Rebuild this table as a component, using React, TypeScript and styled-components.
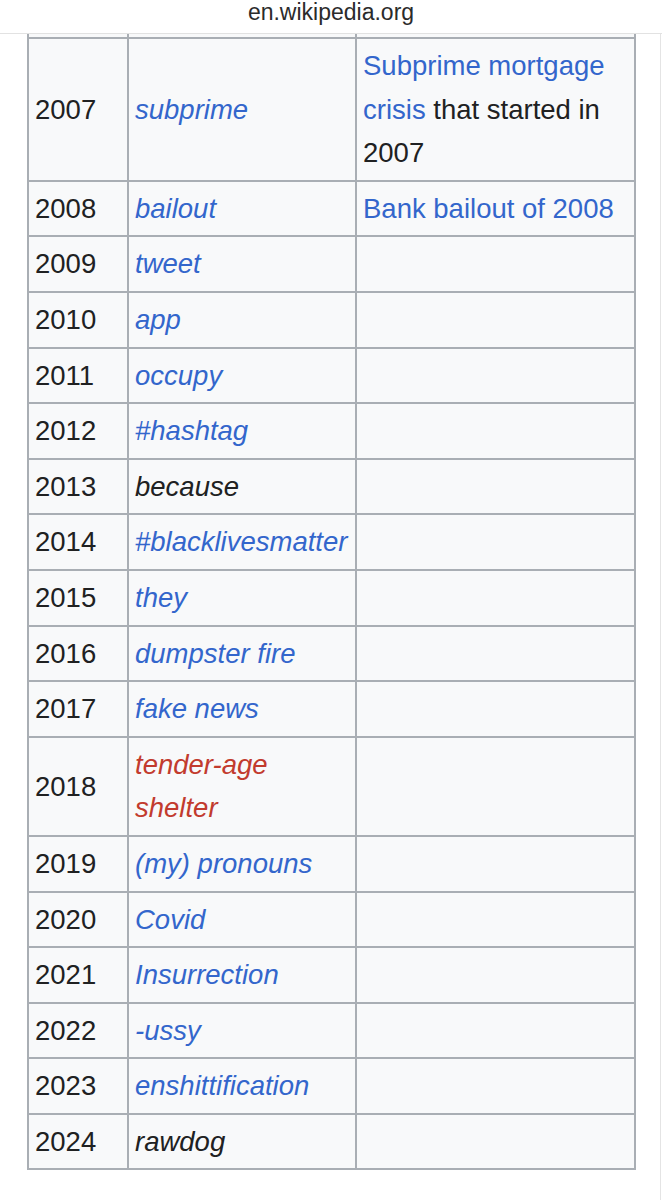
import React from 'react'
import styled, { createGlobalStyle } from 'styled-components'

type Kind = 'link' | 'new' | 'plain'

interface Entry {
	year: string
	word: string
	kind: Kind
	note?: React.ReactNode
}

const GlobalStyle = createGlobalStyle`
	html, body {
		margin: 0;
		padding: 0;
		background: #ffffff;
	}
	body {
		font-family: 'Liberation Sans', Arial, sans-serif;
		-webkit-font-smoothing: antialiased;
	}
`

const Page = styled.div`
	width: 660px;
	min-height: 1200px;
	border-right: 1px solid #e4e4e4;
	background: #ffffff;
`

const AddressBar = styled.div`
	height: 34px;
	display: flex;
	align-items: center;
	justify-content: center;
	border-bottom: 1px solid #e2e2e2;
	background: #ffffff;
	color: #2b2b2b;
	font-size: 23px;
	line-height: 23px;
	padding-bottom: 9px;
	box-sizing: border-box;
	width: 662px;
`

const Content = styled.div`
	padding-left: 27px;
`

const WikiTable = styled.table`
	border-collapse: collapse;
	width: 607px;
	table-layout: fixed;
	background: #f8f9fa;
	color: #202122;
	font-size: 27.5px;
`

const Cell = styled.td`
	border: 2px solid #a9aeb4;
	padding: 5px 6px 5px 6px;
	line-height: 43.6px;
	vertical-align: middle;
	white-space: nowrap;
`

const NoteCell = styled(Cell)`
	white-space: normal;
`

const WrapCell = styled(Cell)`
	white-space: normal;
`

const CutCell = styled.td`
	border: 2px solid #a9aeb4;
	border-top: 0;
	padding: 0;
	height: 3px;
`

const Word = styled.span<{ $kind: Kind }>`
	font-style: italic;
	color: ${({ $kind }) => ($kind === 'link' ? '#3366cc' : $kind === 'new' ? '#c23b2e' : '#202122')};
`

const Link = styled.span`
	color: #3366cc;
`

const entries: Entry[] = [
	{
		year: '2007',
		word: 'subprime',
		kind: 'link',
		note: (
			<>
				<Link>Subprime mortgage crisis</Link> that started in 2007
			</>
		),
	},
	{ year: '2008', word: 'bailout', kind: 'link', note: <Link>Bank bailout of 2008</Link> },
	{ year: '2009', word: 'tweet', kind: 'link' },
	{ year: '2010', word: 'app', kind: 'link' },
	{ year: '2011', word: 'occupy', kind: 'link' },
	{ year: '2012', word: '#hashtag', kind: 'link' },
	{ year: '2013', word: 'because', kind: 'plain' },
	{ year: '2014', word: '#blacklivesmatter', kind: 'link' },
	{ year: '2015', word: 'they', kind: 'link' },
	{ year: '2016', word: 'dumpster fire', kind: 'link' },
	{ year: '2017', word: 'fake news', kind: 'link' },
	{ year: '2018', word: 'tender-age shelter', kind: 'new' },
	{ year: '2019', word: '(my) pronouns', kind: 'link' },
	{ year: '2020', word: 'Covid', kind: 'link' },
	{ year: '2021', word: 'Insurrection', kind: 'link' },
	{ year: '2022', word: '-ussy', kind: 'link' },
	{ year: '2023', word: 'enshittification', kind: 'link' },
	{ year: '2024', word: 'rawdog', kind: 'plain' },
]

export default function App() {
	return (
		<>
			<GlobalStyle />
			<Page>
				<AddressBar>en.wikipedia.org</AddressBar>
				<Content>
					<WikiTable>
						<colgroup>
							<col style={{ width: 100 }} />
							<col style={{ width: 228 }} />
							<col style={{ width: 279 }} />
						</colgroup>
						<tbody>
							<tr>
								<CutCell />
								<CutCell />
								<CutCell />
							</tr>
							{entries.map((e) => {
								const WordCell = e.kind === 'new' ? WrapCell : Cell
								return (
									<tr key={e.year}>
										<Cell>{e.year}</Cell>
										<WordCell>
											<Word $kind={e.kind}>
												{e.kind === 'new' ? (
													<>
														tender-age
														<br />
														shelter
													</>
												) : (
													e.word
												)}
											</Word>
										</WordCell>
										<NoteCell>{e.note}</NoteCell>
									</tr>
								)
							})}
						</tbody>
					</WikiTable>
				</Content>
			</Page>
		</>
	)
}
